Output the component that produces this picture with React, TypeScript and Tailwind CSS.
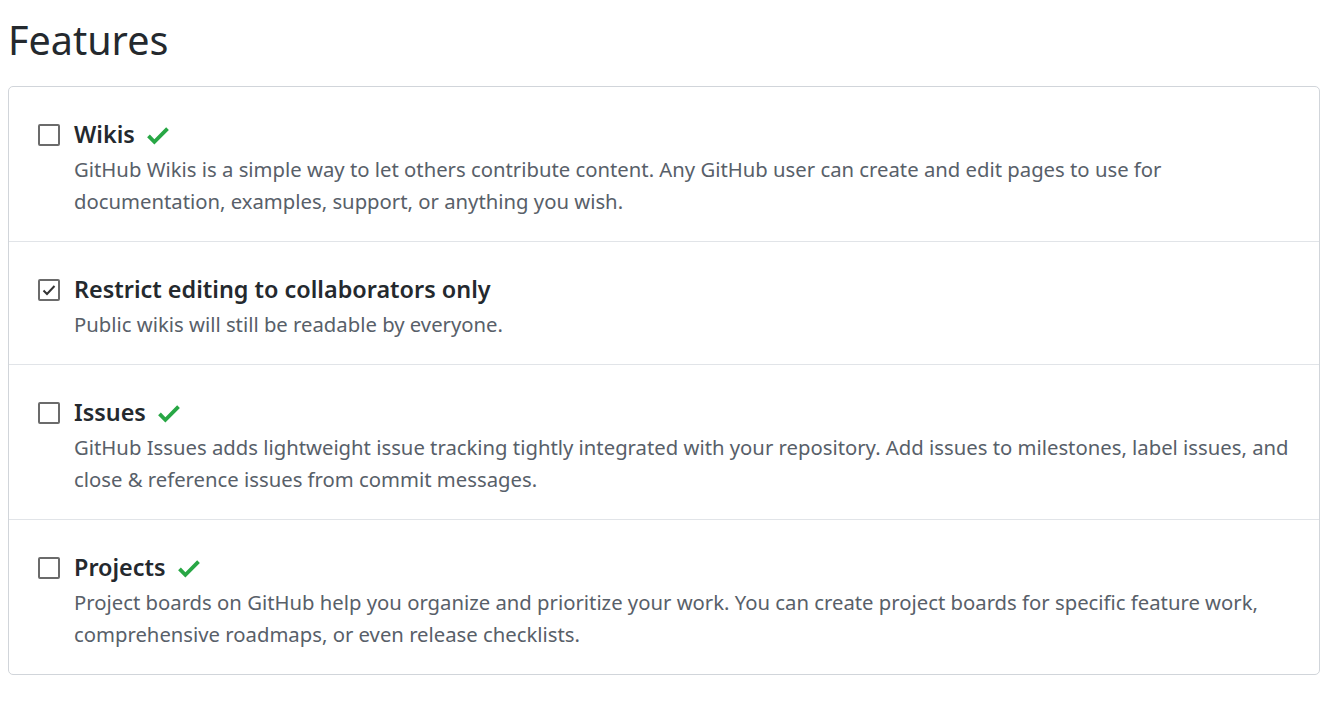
import React from 'react';

const features = [
  {
    title: 'Wikis',
    check: true,
    checked: false,
    desc: 'GitHub Wikis is a simple way to let others contribute content. Any GitHub user can create and edit pages to use for documentation, examples, support, or anything you wish.',
  },
  {
    title: 'Restrict editing to collaborators only',
    check: false,
    checked: true,
    desc: 'Public wikis will still be readable by everyone.',
  },
  {
    title: 'Issues',
    check: true,
    checked: false,
    desc: 'GitHub Issues adds lightweight issue tracking tightly integrated with your repository. Add issues to milestones, label issues, and close & reference issues from commit messages.',
  },
  {
    title: 'Projects',
    check: true,
    checked: false,
    desc: 'Project boards on GitHub help you organize and prioritize your work. You can create project boards for specific feature work, comprehensive roadmaps, or even release checklists.',
  },
];

function GreenCheck() {
  return (
    <svg width="22" height="29" viewBox="0 0 12 16" className="ml-[12px] fill-[#28a745]">
      <path fillRule="evenodd" d="M12 5l-8 8-4-4 1.5-1.5L4 10l6.5-6.5L12 5z" />
    </svg>
  );
}

function Box({ checked }: { checked: boolean }) {
  return (
    <span className="mt-[7px] flex h-[22px] w-[22px] shrink-0 items-center justify-center rounded-[2px] border-2 border-[#6b6b6b] bg-white">
      {checked && (
        <svg width="16" height="16" viewBox="0 0 16 16" fill="none">
          <path d="M2.5 8.5l3.5 3.5 7.5-8" stroke="#333" strokeWidth="2" />
        </svg>
      )}
    </span>
  );
}

export default function App() {
  return (
    <div className="min-h-screen bg-white pl-2 pr-[13px] text-[#24292e]" style={{ fontFamily: '"Noto Sans", sans-serif' }}>
      <h2 className="pt-[12px] pb-[18px] text-[39.5px] font-normal leading-[56px]">Features</h2>
      <div className="rounded-[5px] border border-[#d1d5da]">
        {features.map((f, i) => (
          <div key={f.title} className={`flex gap-[14px] pt-[30px] pb-[24px] pl-[29px] pr-[12px] ${i > 0 ? 'border-t border-[#e1e4e8]' : ''}`}>
            <Box checked={f.checked} />
            <div>
              <div className="flex h-[36px] items-center text-[23.4px] font-semibold">
                {f.title}
                {f.check && <GreenCheck />}
              </div>
              <p className="text-[20.3px] leading-[32px] text-[#586069]">{f.desc}</p>
            </div>
          </div>
        ))}
      </div>
    </div>
  );
}
